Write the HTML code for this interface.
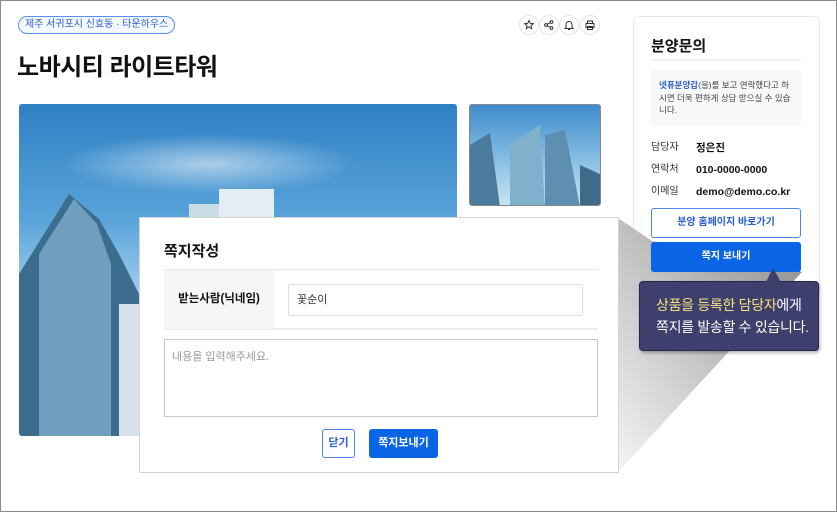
<!DOCTYPE html>
<html><head><meta charset="utf-8"><style>
*{box-sizing:border-box;margin:0;padding:0}
body{width:837px;height:512px;position:relative;overflow:hidden;background:#fff;font-family:"Liberation Sans","Noto Sans CJK KR",sans-serif;color:#111}
.frame{position:absolute;left:0;top:0;width:837px;height:512px;border:1px solid #8a8a8a}
.tag{position:absolute;left:18px;top:16px;height:18px;padding:0 6px;border:1px solid #5c8ff0;border-radius:9px;color:#2a5fd0;font-size:10px;line-height:16px;background:#f4f8ff}
h1{position:absolute;left:17px;top:47px;font-size:24px;font-weight:700;letter-spacing:-0.5px}
.ic{position:absolute;top:15px;width:20px;height:20px;border:1px solid #e5e5e5;border-radius:50%;background:#fff}
.img{position:absolute;border-radius:3px;overflow:hidden}
.card{position:absolute;left:633px;top:16px;width:187px;height:280px;border:1px solid #e8e8e8;border-radius:6px;background:#fff}
.abs{position:absolute}
.btn{position:absolute;left:651px;width:150px;font-size:10px;font-weight:700;text-align:center;border-radius:3px}
.modal{position:absolute;left:139px;top:217px;width:480px;height:256px;background:#fff;border:1px solid #d4d4d4}
</style></head><body>
<div class="tag">제주 서귀포시 신효동 · 타운하우스</div>
<h1>노바시티 라이트타워</h1>
<div class="ic" style="left:519px"><svg width="18" height="18" viewBox="0 0 18 18"><path d="M9 4.5l1.3 2.8 3 .3-2.3 2 .7 3-2.7-1.6-2.7 1.6.7-3-2.3-2 3-.3z" fill="none" stroke="#333" stroke-width="1"/></svg></div>
<div class="ic" style="left:539px"><svg width="18" height="18" viewBox="0 0 18 18"><circle cx="6" cy="9" r="1.4" fill="none" stroke="#333"/><circle cx="11.5" cy="6" r="1.4" fill="none" stroke="#333"/><circle cx="11.5" cy="12" r="1.4" fill="none" stroke="#333"/><path d="M7.2 8.3l3-1.6M7.2 9.7l3 1.6" stroke="#333"/></svg></div>
<div class="ic" style="left:559px"><svg width="18" height="18" viewBox="0 0 18 18"><path d="M6 11.5V8.5a3 3 0 016 0v3l1 1H5z M8 13.5h2" fill="none" stroke="#333"/></svg></div>
<div class="ic" style="left:580px"><svg width="18" height="18" viewBox="0 0 18 18"><path d="M6.5 7.5V5h5v2.5M5 7.5h8v4H5zM6.5 10.5h5v3h-5z" fill="none" stroke="#333"/></svg></div>

<div class="img" style="left:19px;top:104px;width:438px;height:332px;background:linear-gradient(180deg,#2f80c4 0%,#5aa4da 35%,#a9d3ee 60%,#d8edf8 80%)">
<div class="abs" style="left:40px;top:30px;width:300px;height:60px;background:radial-gradient(ellipse,rgba(255,255,255,.55),rgba(255,255,255,0) 70%)"></div>
<svg class="abs" style="left:0;top:0" width="438" height="332"><polygon points="0,170 50,90 80,115 100,150 120,190 120,332 0,332" fill="#3d6d8e"/><polygon points="20,150 55,95 78,120 92,160 92,332 20,332" fill="#6e9fbf"/><polygon points="100,200 125,200 135,332 100,332" fill="#d7e1e8"/><rect x="200" y="85" width="55" height="40" fill="#e2eef3"/><rect x="170" y="100" width="30" height="25" fill="#c9dde6"/></svg></div>
<div class="img" style="left:469px;top:104px;width:132px;height:102px;border:1px solid #888;background:linear-gradient(180deg,#3f8ccb,#8ec3e6 60%,#c9e3f3)">
<svg class="abs" style="left:0;top:0" width="132" height="102"><polygon points="0,40 20,28 30,102 0,102" fill="#4a7b9c"/><polygon points="40,40 70,20 75,102 40,102" fill="#7fb0cc"/><polygon points="75,30 95,25 110,102 75,102" fill="#5e8fb0"/><polygon points="110,60 132,70 132,102 110,102" fill="#3f6a88"/></svg></div>

<div class="card">
<div class="abs" style="left:17px;top:18px;font-size:15px;font-weight:700">분양문의</div>
<div class="abs" style="left:17px;top:42px;width:150px;border-top:2px solid #f0f0f0"></div>
<div class="abs" style="left:17px;top:53px;width:150px;height:56px;background:#f7f8fa;padding:9px 8px;font-size:8.5px;line-height:12.5px;color:#444"><b style="color:#2a5fd0">넷퓨분양갑</b>(을)를 보고 연락했다고 하시면 더욱 편하게 상담 받으실 수 있습니다.</div>
<div class="abs" style="left:17px;top:120px;font-size:10px;line-height:22px;color:#333">담당자<br>연락처<br>이메일</div>
<div class="abs" style="left:62px;top:120px;font-size:10.5px;line-height:22px;font-weight:700">정은진<br>010-0000-0000<br>demo@demo.co.kr</div>
</div>
<div class="btn" style="top:208px;height:30px;line-height:28px;border:1px solid #4d86ea;color:#2a5fd0;background:#fff">분양 홈페이지 바로가기</div>
<svg class="abs" style="left:0;top:0" width="837" height="512"><defs><linearGradient id="g" x1="1" y1="0" x2="0" y2="1"><stop offset="0" stop-color="#8c8c8c"/><stop offset="1" stop-color="#f4f4f4"/></linearGradient></defs><polygon points="618,218 652,241 802,272 618,472" fill="url(#g)"/></svg>
<div class="btn" style="top:242px;height:30px;line-height:30px;background:#0a64e6;color:#fff">쪽지 보내기</div>
<div class="abs" style="left:639px;top:281px;width:180px;height:70px;background:#3e3f6d;border:1px solid #25264a;border-radius:4px;box-shadow:1px 2px 3px rgba(0,0,0,.3);color:#fff;font-size:14px;line-height:22px;padding:12px 0 0 16px;letter-spacing:-0.3px"><span style="color:#f3e27c">상품을 등록한 담당자</span>에게<br>쪽지를 발송할 수 있습니다.</div>
<svg class="abs" style="left:764px;top:268px" width="20" height="15"><polygon points="9,0 2,14 17,14" fill="#3e3f6d"/></svg>

<div class="modal">
<div class="abs" style="left:24px;top:22px;font-size:15px;font-weight:700">쪽지작성</div>
<div class="abs" style="left:24px;top:51px;width:434px;height:61px;border-top:1px solid #e8e8e8;border-bottom:2px solid #ececec"></div>
<div class="abs" style="left:24px;top:52px;width:110px;height:59px;background:#f5f6f8;font-size:11.5px;font-weight:700;text-align:center;line-height:59px">받는사람(닉네임)</div>
<div class="abs" style="left:148px;top:66px;width:295px;height:32px;border:1px solid #ddd;border-radius:2px;font-size:11px;line-height:30px;padding-left:8px;color:#333">꽃순이</div>
<div class="abs" style="left:24px;top:121px;width:434px;height:78px;border:1px solid #c8c8c8;font-size:11px;color:#999;padding:8px 7px">내용을 입력해주세요.</div>
<div class="abs" style="left:182px;top:211px;width:33px;height:29px;border:1px solid #4d86ea;border-radius:3px;color:#2a5fd0;font-size:11px;font-weight:700;text-align:center;line-height:27px">닫기</div>
<div class="abs" style="left:229px;top:211px;width:69px;height:29px;background:#0a64e6;border-radius:3px;color:#fff;font-size:11px;font-weight:700;text-align:center;line-height:29px">쪽지보내기</div>
</div>
<div class="frame"></div>
</body></html>
